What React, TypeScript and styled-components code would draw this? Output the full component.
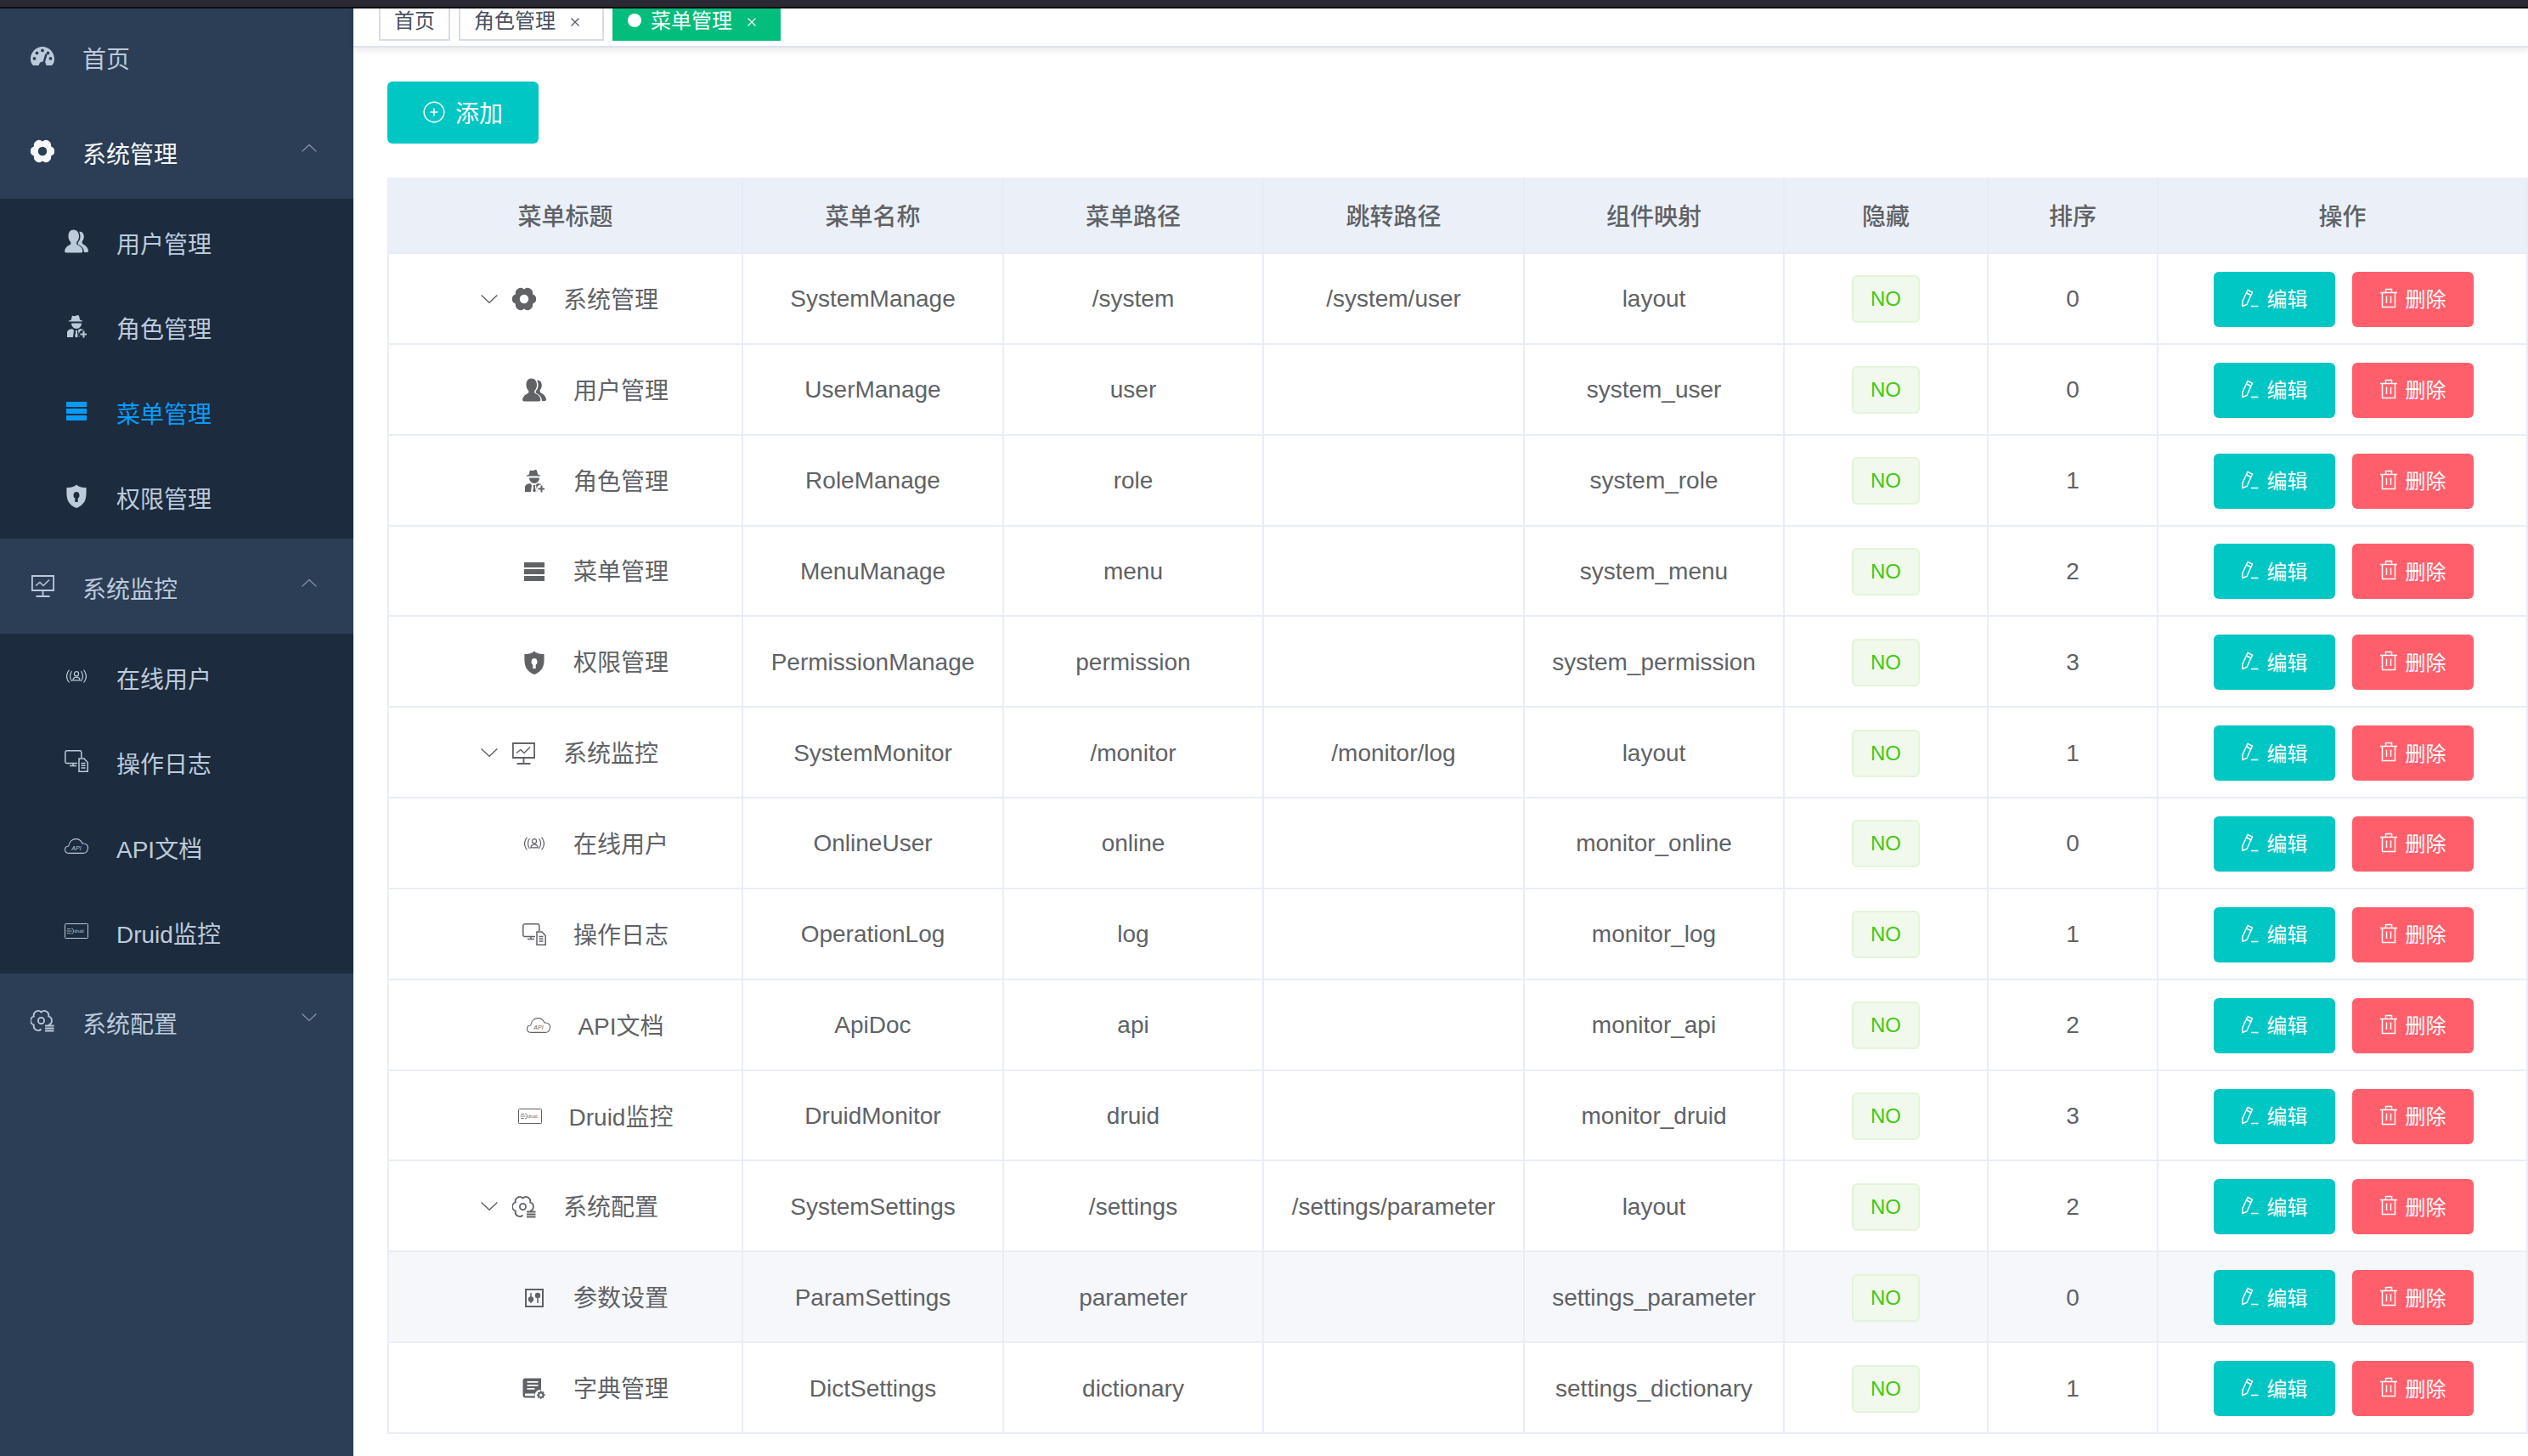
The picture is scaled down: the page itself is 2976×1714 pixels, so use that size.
import React from 'react';
import styled, { createGlobalStyle } from 'styled-components';

const GlobalStyle = createGlobalStyle`
  html, body {
    margin: 0;
    padding: 0;
    background: #fff;
    overflow: hidden;
  }
  body {
    font-family: "Liberation Sans", "Noto Sans CJK SC", sans-serif;
    color: #606266;
  }
`;

const Page = styled.div`
  width: 2976px;
  height: 1714px;
  display: flex;
  flex-direction: column;
  overflow: hidden;
`;

const WindowEdge = styled.div`
  flex: none;
  height: 10px;
  box-sizing: border-box;
  background: #2a2833;
  border-bottom: 2px solid #0e0e10;
`;

const Shell = styled.div`
  flex: 1;
  display: flex;
  min-height: 0;
`;

const Sidebar = styled.aside`
  flex: none;
  width: 416px;
  background: #2c3e55;
`;

const GroupRow = styled.div<{ $bright?: boolean }>`
  height: 112px;
  display: flex;
  align-items: center;
  padding: 0 43px 0 36px;
  color: ${(p) => (p.$bright ? '#f6f7f9' : '#bccadb')};
`;

const SubList = styled.div`
  background: #1c2b3e;
`;

const SubRow = styled.div<{ $active?: boolean }>`
  height: 100px;
  display: flex;
  align-items: center;
  padding-left: 76px;
  color: ${(p) => (p.$active ? '#069dfa' : '#bccadb')};
`;

const MenuIcon = styled.span`
  flex: none;
  width: 28px;
  height: 28px;
  margin-right: 33px;
  display: flex;
  align-items: center;
  justify-content: center;
  svg {
    display: block;
    flex: none;
  }
`;

const MenuLabel = styled.span`
  flex: 1;
  font-size: 28px;
  line-height: 36px;
  padding-top: 10px;
`;

const Caret = styled.span`
  flex: none;
  display: flex;
  color: #8793a3;
  margin-top: -8px;
`;

const Main = styled.main`
  flex: 1;
  min-width: 0;
`;

const TabBar = styled.div`
  height: 46px;
  box-sizing: border-box;
  display: flex;
  gap: 10px;
  padding-left: 30px;
  border-bottom: 2px solid #dfe3ec;
  box-shadow: 0 3px 8px rgba(0, 21, 41, 0.1);
`;

const Tab = styled.div<{ $active?: boolean }>`
  height: 38px;
  box-sizing: border-box;
  display: flex;
  align-items: flex-start;
  padding: 1px 16px 0;
  border: 2px solid ${(p) => (p.$active ? '#03bd7d' : '#d8dce5')};
  border-top: none;
  background: ${(p) => (p.$active ? '#03bd7d' : '#fff')};
  color: ${(p) => (p.$active ? '#fff' : '#495060')};
  font-size: 24px;
  line-height: 28px;
`;

const TabDot = styled.span`
  width: 16px;
  height: 16px;
  margin: 5px 11px 0 0;
  border-radius: 50%;
  background: #fff;
`;

const TabClose = styled.span`
  margin: 10px 11px 0 18px;
  display: flex;
`;

const Content = styled.div`
  padding: 40px 0 0 40px;
`;

const AddButton = styled.button`
  width: 178px;
  height: 73px;
  display: flex;
  align-items: center;
  justify-content: center;
  gap: 12px;
  padding: 0 0 2px;
  border: none;
  border-radius: 6px;
  background: #00c6c4;
  color: #fff;
  font: inherit;
  font-size: 28px;
`;

const Table = styled.table`
  width: 2520px;
  margin-top: 40px;
  table-layout: fixed;
  border-collapse: separate;
  border-spacing: 0;
  border-left: 2px solid #e9edf7;
`;

const HeadCell = styled.th`
  height: 90px;
  box-sizing: border-box;
  padding: 0;
  background: #ebf0f8;
  border-right: 2px solid #e6ebf4;
  border-bottom: 2px solid #e6ebf4;
  color: #5f6266;
  font-size: 28px;
  font-weight: 500;
  text-align: center;
`;

const BodyRow = styled.tr<{ $hover?: boolean }>`
  background: ${(p) => (p.$hover ? '#f5f7fb' : '#fff')};
`;

const Cell = styled.td`
  height: 106.85px;
  box-sizing: border-box;
  padding: 2px 0 0;
  border-right: 2px solid #e9edf7;
  border-bottom: 2px solid #e9edf7;
  color: #606266;
  font-size: 28px;
  text-align: center;
`;

const TreeContent = styled.div<{ $parent: boolean }>`
  display: flex;
  align-items: center;
  justify-content: center;
  padding-left: ${(p) => (p.$parent ? '10px' : '71px')};
  color: #606266;
`;

const TreeCaret = styled.span`
  flex: none;
  display: flex;
  margin-right: 17px;
`;

const TreeIcon = styled.span`
  flex: none;
  width: 28px;
  height: 28px;
  margin-right: 32px;
  display: flex;
  align-items: center;
  justify-content: center;
  svg {
    display: block;
    flex: none;
  }
`;

const TreeLabel = styled.span`
  padding-bottom: 3px;
`;

const Tag = styled.span`
  display: inline-block;
  width: 80px;
  height: 56px;
  box-sizing: border-box;
  border: 2px solid #e2f5d9;
  border-radius: 6px;
  background: #f0f9eb;
  color: #42c814;
  font-size: 24px;
  line-height: 52px;
  vertical-align: middle;
`;

const Actions = styled.div`
  display: flex;
  justify-content: center;
  gap: 20px;
  padding-left: 3px;
`;

const ActionButton = styled.button<{ $danger?: boolean }>`
  width: 143px;
  height: 65px;
  display: flex;
  align-items: center;
  justify-content: center;
  gap: 10px;
  padding: 0 0 3px;
  border: none;
  border-radius: 6px;
  background: ${(p) => (p.$danger ? '#ff5f6b' : '#00c6c4')};
  color: #fff;
  font: inherit;
  font-size: 24px;
`;

// outline made of round lobes meeting in shallow valleys, used by both gear icons
function lobedPath(cx: number, cy: number, valley: number, lobe: number, skip?: number) {
  const at = (deg: number) => {
    const rad = (deg * Math.PI) / 180;
    return `${(cx + valley * Math.cos(rad)).toFixed(2)} ${(cy + valley * Math.sin(rad)).toFixed(2)}`;
  };
  let d = `M${at(30)}`;
  for (let i = 0; i < 6; i += 1) {
    const next = at(30 + (i + 1) * 60);
    d += i === skip ? `M${next}` : `A${lobe} ${lobe} 0 0 1 ${next}`;
  }
  return d;
}

const DashboardIcon = () => (
  <svg width="28" height="24" viewBox="0 0 28 24" fill="currentColor">
    <path
      fillRule="evenodd"
      d="M3 23C1 21 0 18.500 0 15.500 0 7.500 6.300 1 14 1s14 6.500 14 14.500c0 3-1 5.500-3 7.500h-6.700a4.500 4.500 0 0 0-1.300-3.800l2.700-9.200-2.400-.7-2.700 9.200A4.600 4.600 0 0 0 9.700 23zM14 3.500a1.900 1.900 0 1 0 0 3.800 1.900 1.900 0 0 0 0-3.800zM7.500 6.500a1.900 1.900 0 1 0 0 3.800 1.900 1.900 0 0 0 0-3.800zM20.500 6.500a1.900 1.900 0 1 0 0 3.800 1.900 1.900 0 0 0 0-3.800zM4.500 13a1.900 1.900 0 1 0 0 3.800 1.900 1.900 0 0 0 0-3.800zM23.500 13a1.900 1.900 0 1 0 0 3.800 1.900 1.900 0 0 0 0-3.800z"
    />
  </svg>
);

const GearIcon = () => (
  <svg width="28" height="28" viewBox="0 0 28 28" fill="currentColor">
    <path fillRule="evenodd" d={`${lobedPath(14, 14, 11.5, 6)}zM14 8.800a5.200 5.200 0 1 0 0 10.400 5.200 5.200 0 0 0 0-10.400z`} />
  </svg>
);

const UsersIcon = () => (
  <svg width="28" height="28" viewBox="0 0 28 28" fill="currentColor">
    <path d="M10.500.500c3.900 0 6.500 3.100 6.500 7.400 0 3-1.100 5.500-2.800 7.100v1.400c0 1 .4 1.500 1.300 1.900 3.200 1.400 5.300 3.500 5.800 6.500.3 1.800-.4 2.700-2 2.700H2.200c-1.600 0-2.300-.9-2-2.700.5-3 2.600-5.100 5.800-6.500.9-.4 1.300-.9 1.300-1.900V15C5.600 13.400 4.500 10.900 4.500 7.900 4.500 3.600 6.600.500 10.500.500z" />
    <path d="M17.500 2.500c3.500 0 5.300 2.800 5.300 6 0 2.400-.8 4.400-2.100 5.700v1.600c.1.800.4 1.200 1.100 1.600 3 1.500 5.300 3.800 6 6.600.5 2-.2 3.100-2 3.100h-2.800c.1-3.800-2.200-7.200-6.600-9.200-.5-.2-.7-.5-.7-1v-1.400c2-2.300 2.800-4.600 2.800-7.100 0-2-.4-3.700-1-5z" />
  </svg>
);

const SecretIcon = () => (
  <svg width="24" height="28" viewBox="2 0 24 28" fill="currentColor">
    <path d="M9 1.500c1.500.8 3.500.8 5 0 1.500-.8 2.500-.5 3 .5l1.200 4.500 3 1.200v.8H4.800v-.8l3-1.200L8.800 2c.2-.4.200-.5.200-.5z" />
    <path d="M8 10.500h12c0 3.500-2.500 6.500-6 6.500s-6-3-6-6.500z" />
    <path d="M3 27v-5.500c0-2.200 2-4 4.500-4l1.500-.5 2 2-1 7.500-.5.500H3zM12.500 19h3l-.7 2 1 5-1.800 1.500L12.200 26l1-5zM18 17l2 .5c.7 0 1.500.2 2 .4v.6a5 5 0 0 0-4.500 7.500l.3.500h-1.300l.5-.5-1-7.500z" />
    <path d="M21.500 19.500h2v3h3v2h-3v3h-2v-3h-3v-2h3z" />
  </svg>
);

const BarsIcon = () => (
  <svg width="24" height="22" viewBox="0 0 24 22" fill="currentColor">
    <path d="M0 0h24v6H0zM0 8h24v6H0zM0 16h24v6H0z" />
  </svg>
);

const ShieldIcon = () => (
  <svg width="24" height="28" viewBox="0 0 28 28" preserveAspectRatio="none" fill="currentColor">
    <path
      fillRule="evenodd"
      d="M14 .5c2.500 2 6 3.500 13.500 3.500 0 5 .3 10-1.200 14C24.500 22.500 20 26 14 28 8 26 3.500 22.500 1.700 18 .2 14 .5 9 .5 4 8 4 11.500 2.500 14 .5zm0 8.500a4 4 0 0 0-2 7.500V21h4v-4.500A4 4 0 0 0 14 9z"
    />
  </svg>
);

const ScreenChartIcon = () => (
  <svg width="27" height="26" viewBox="0 0 27 26" fill="none" stroke="currentColor" strokeWidth="1.800">
    <path d="M.9 1h25.200v17H.9z" />
    <path d="M5 12.500l5-4 4 4 7-7" strokeWidth="1.500" />
    <path d="M13.500 18v7M5.500 25h16" />
  </svg>
);

const SignalIcon = () => (
  <svg width="24" height="16" viewBox="0 0 24 16" fill="none" stroke="currentColor" strokeWidth="1.200">
    <circle cx="12" cy="5.200" r="2.600" />
    <path d="M7.800 12.800c.4-2.400 2-3.600 4.200-3.600s3.800 1.200 4.200 3.600z" />
    <path d="M6.500 2Q2.500 8 6.500 14M3.500.5Q-2.500 8 3.500 15.500M17.500 2Q21.500 8 17.500 14M20.500.5Q26.500 8 20.500 15.500" />
  </svg>
);

const LogIcon = () => (
  <svg width="28" height="26" viewBox="0 0 28 26" fill="none" stroke="currentColor" strokeWidth="1.500">
    <path d="M15 15.500H2.500A1.800 1.800 0 0 1 .8 13.700V2.500A1.800 1.800 0 0 1 2.500.8h15.500a1.800 1.800 0 0 1 1.800 1.700V9" />
    <path d="M6 18.500h8M10 15.500v3" />
    <path d="M17 10h6l4.200 4.500v10.700H17z" />
    <path d="M19.500 15.500h5M19.500 18.300h5M19.500 21.100h5" />
  </svg>
);

const CloudIcon = () => (
  <svg width="28" height="18" viewBox="0 0 28 18" fill="none" stroke="currentColor" strokeWidth="1.100">
    <path d="M5.500 17.400c-6.500 0-6.600-7.800-.8-8.400C5.500 4 9 .6 13.500.6c3.500 0 6 2 7.500 5.400 5-.5 7 2.800 6.400 6-.5 3.200-2.500 5.400-5.400 5.400z" />
    <text x="14" y="13.500" fontSize="7" fontStyle="italic" fill="currentColor" stroke="none" textAnchor="middle" fontFamily="Liberation Sans">
      API
    </text>
  </svg>
);

const DruidIcon = () => (
  <svg width="28" height="18" viewBox="0 0 28 18" fill="none" stroke="currentColor" strokeWidth="1">
    <rect x=".5" y=".5" width="27" height="17" rx=".8" />
    <path d="M3 6.500h4M2.500 9h6M3 11.500h4" strokeWidth=".8" />
    <path d="M8 6c2 0 2.500 1.200 2.500 3S10 12 8 12" strokeWidth=".8" />
    <text x="11.500" y="11" fontSize="5" fill="currentColor" stroke="none" fontFamily="Liberation Sans">
      druid
    </text>
  </svg>
);

const GearListIcon = () => (
  <svg width="28" height="28" viewBox="0 0 28 28" fill="none" stroke="currentColor" strokeWidth="1.800">
    <path d={lobedPath(12.500, 13.500, 10, 5.200, 0)} />
    <circle cx="12.500" cy="13.500" r="3.600" />
    <path d="M17 19.500h10.500M17 22.500h10.500M17 25.500h10.500" />
  </svg>
);

const SlidersIcon = () => (
  <svg width="22" height="22" viewBox="0 0 22 22" fill="none" stroke="currentColor" strokeWidth="2">
    <rect x="1" y="1" width="20" height="20" />
    <path d="M7 5v12M15 5v12" strokeWidth="1.500" />
    <circle cx="7" cy="12.500" r="2.200" fill="currentColor" />
    <circle cx="15" cy="8" r="2.200" fill="currentColor" />
  </svg>
);

const DictIcon = () => (
  <svg width="28" height="28" viewBox="0 0 28 28" fill="currentColor">
    <path
      fillRule="evenodd"
      d="M3 1.500h19v13.700a6.500 6.500 0 0 0-6.800 9.300H3.500C1.800 24.500.5 23.300.5 21.500V4C.5 2.600 1.600 1.500 3 1.500zM5.500 5v1.800h13V5zm0 4v1.800h13V9zm0 4v1.800h9V13zM3 19.500v2.800h11v-2.800z"
    />
    <path
      fillRule="evenodd"
      d="M21 16l1.500.2.400 1.600 1.500-.7 1.200 1-.7 1.500 1.600.5V22l-1.600.5.700 1.500-1.200 1-1.500-.7-.4 1.500H21l-.5-1.500-1.500.7-1.100-1 .7-1.500-1.600-.5v-1.600l1.600-.5-.7-1.500 1.100-1 1.500.7zm.7 3.500a1.800 1.800 0 1 0 0 3.600 1.800 1.800 0 0 0 0-3.600z"
    />
  </svg>
);

const ChevronIcon = ({ up = false, width = 18 }: { up?: boolean; width?: number }) => (
  <svg width={width} height={width * 0.55} viewBox="0 0 18 10" fill="none" stroke="currentColor" strokeWidth="1.300">
    <path d={up ? 'M.5 9.500 9 1.500l8.500 8' : 'M.5.500 9 8.500l8.500-8'} />
  </svg>
);

const PlusCircleIcon = () => (
  <svg width="26" height="26" viewBox="0 0 26 26" fill="none" stroke="currentColor" strokeWidth="1.500">
    <circle cx="13" cy="13" r="11.800" />
    <path d="M13 8.500v9M8.500 13h9" />
  </svg>
);

const PencilIcon = () => (
  <svg width="20" height="24" viewBox="0 0 20 24" fill="none" stroke="currentColor" strokeWidth="1.500">
    <path d="M7 2.500 12.500 5 6 19.500 1 21.500.8 16z" />
    <path d="M5.500 6 11 8.500M11 21.500h8.500" />
  </svg>
);

const TrashIcon = () => (
  <svg width="20" height="24" viewBox="0 0 20 24" fill="none" stroke="currentColor" strokeWidth="1.500">
    <path d="M0 5.500h20M6.500 5.500V1.500h7v4M2.500 5.500v17h15v-17M7.500 9.500v8.500M12.500 9.500v8.500" />
  </svg>
);

const CloseIcon = () => (
  <svg width="10" height="10" viewBox="0 0 10 10" stroke="currentColor" strokeWidth="1.100">
    <path d="M.5.500l9 9M9.500.500l-9 9" />
  </svg>
);

const ICONS: Record<string, React.ReactElement> = {
  dashboard: <DashboardIcon />,
  gear: <GearIcon />,
  users: <UsersIcon />,
  secret: <SecretIcon />,
  bars: <BarsIcon />,
  shield: <ShieldIcon />,
  monitor: <ScreenChartIcon />,
  signal: <SignalIcon />,
  log: <LogIcon />,
  cloud: <CloudIcon />,
  druid: <DruidIcon />,
  gearList: <GearListIcon />,
  sliders: <SlidersIcon />,
  dict: <DictIcon />,
};

const TABS = [
  { label: '首页' },
  { label: '角色管理', closable: true },
  { label: '菜单管理', closable: true, active: true },
];

const COLUMNS = [
  { title: '菜单标题', width: 417 },
  { title: '菜单名称', width: 307 },
  { title: '菜单路径', width: 306 },
  { title: '跳转路径', width: 307 },
  { title: '组件映射', width: 306 },
  { title: '隐藏', width: 240 },
  { title: '排序', width: 200 },
  { title: '操作', width: 435 },
];

const ROWS = [
  { icon: 'gear', title: '系统管理', name: 'SystemManage', path: '/system', redirect: '/system/user', comp: 'layout', sort: 0, parent: true },
  { icon: 'users', title: '用户管理', name: 'UserManage', path: 'user', comp: 'system_user', sort: 0 },
  { icon: 'secret', title: '角色管理', name: 'RoleManage', path: 'role', comp: 'system_role', sort: 1 },
  { icon: 'bars', title: '菜单管理', name: 'MenuManage', path: 'menu', comp: 'system_menu', sort: 2 },
  { icon: 'shield', title: '权限管理', name: 'PermissionManage', path: 'permission', comp: 'system_permission', sort: 3 },
  { icon: 'monitor', title: '系统监控', name: 'SystemMonitor', path: '/monitor', redirect: '/monitor/log', comp: 'layout', sort: 1, parent: true },
  { icon: 'signal', title: '在线用户', name: 'OnlineUser', path: 'online', comp: 'monitor_online', sort: 0 },
  { icon: 'log', title: '操作日志', name: 'OperationLog', path: 'log', comp: 'monitor_log', sort: 1 },
  { icon: 'cloud', title: 'API文档', name: 'ApiDoc', path: 'api', comp: 'monitor_api', sort: 2 },
  { icon: 'druid', title: 'Druid监控', name: 'DruidMonitor', path: 'druid', comp: 'monitor_druid', sort: 3 },
  { icon: 'gearList', title: '系统配置', name: 'SystemSettings', path: '/settings', redirect: '/settings/parameter', comp: 'layout', sort: 2, parent: true },
  { icon: 'sliders', title: '参数设置', name: 'ParamSettings', path: 'parameter', comp: 'settings_parameter', sort: 0, hover: true },
  { icon: 'dict', title: '字典管理', name: 'DictSettings', path: 'dictionary', comp: 'settings_dictionary', sort: 1 },
];

export default function App() {
  return (
    <Page>
      <GlobalStyle />
      <WindowEdge />
      <Shell>
        <Sidebar>
          <GroupRow>
            <MenuIcon>{ICONS.dashboard}</MenuIcon>
            <MenuLabel>首页</MenuLabel>
          </GroupRow>
          <GroupRow $bright>
            <MenuIcon>{ICONS.gear}</MenuIcon>
            <MenuLabel>系统管理</MenuLabel>
            <Caret><ChevronIcon up /></Caret>
          </GroupRow>
          <SubList>
            <SubRow><MenuIcon>{ICONS.users}</MenuIcon><MenuLabel>用户管理</MenuLabel></SubRow>
            <SubRow><MenuIcon>{ICONS.secret}</MenuIcon><MenuLabel>角色管理</MenuLabel></SubRow>
            <SubRow $active><MenuIcon>{ICONS.bars}</MenuIcon><MenuLabel>菜单管理</MenuLabel></SubRow>
            <SubRow><MenuIcon>{ICONS.shield}</MenuIcon><MenuLabel>权限管理</MenuLabel></SubRow>
          </SubList>
          <GroupRow>
            <MenuIcon>{ICONS.monitor}</MenuIcon>
            <MenuLabel>系统监控</MenuLabel>
            <Caret><ChevronIcon up /></Caret>
          </GroupRow>
          <SubList>
            <SubRow><MenuIcon>{ICONS.signal}</MenuIcon><MenuLabel>在线用户</MenuLabel></SubRow>
            <SubRow><MenuIcon>{ICONS.log}</MenuIcon><MenuLabel>操作日志</MenuLabel></SubRow>
            <SubRow><MenuIcon>{ICONS.cloud}</MenuIcon><MenuLabel>API文档</MenuLabel></SubRow>
            <SubRow><MenuIcon>{ICONS.druid}</MenuIcon><MenuLabel>Druid监控</MenuLabel></SubRow>
          </SubList>
          <GroupRow>
            <MenuIcon>{ICONS.gearList}</MenuIcon>
            <MenuLabel>系统配置</MenuLabel>
            <Caret><ChevronIcon /></Caret>
          </GroupRow>
        </Sidebar>
        <Main>
          <TabBar>
            {TABS.map((tab) => (
              <Tab key={tab.label} $active={tab.active}>
                {tab.active && <TabDot />}
                {tab.label}
                {tab.closable && <TabClose><CloseIcon /></TabClose>}
              </Tab>
            ))}
          </TabBar>
          <Content>
            <AddButton type="button">
              <PlusCircleIcon />
              添加
            </AddButton>
            <Table>
              <colgroup>
                {COLUMNS.map((col) => (
                  <col key={col.title} width={col.width} />
                ))}
              </colgroup>
              <thead>
                <tr>
                  {COLUMNS.map((col) => (
                    <HeadCell key={col.title}>{col.title}</HeadCell>
                  ))}
                </tr>
              </thead>
              <tbody>
                {ROWS.map((row) => (
                  <BodyRow key={row.name} $hover={row.hover}>
                    <Cell>
                      <TreeContent $parent={!!row.parent}>
                        {row.parent && <TreeCaret><ChevronIcon width={20} /></TreeCaret>}
                        <TreeIcon>{ICONS[row.icon]}</TreeIcon>
                        <TreeLabel>{row.title}</TreeLabel>
                      </TreeContent>
                    </Cell>
                    <Cell>{row.name}</Cell>
                    <Cell>{row.path}</Cell>
                    <Cell>{row.redirect}</Cell>
                    <Cell>{row.comp}</Cell>
                    <Cell><Tag>NO</Tag></Cell>
                    <Cell>{row.sort}</Cell>
                    <Cell>
                      <Actions>
                        <ActionButton type="button"><PencilIcon />编辑</ActionButton>
                        <ActionButton type="button" $danger><TrashIcon />删除</ActionButton>
                      </Actions>
                    </Cell>
                  </BodyRow>
                ))}
              </tbody>
            </Table>
          </Content>
        </Main>
      </Shell>
    </Page>
  );
}
